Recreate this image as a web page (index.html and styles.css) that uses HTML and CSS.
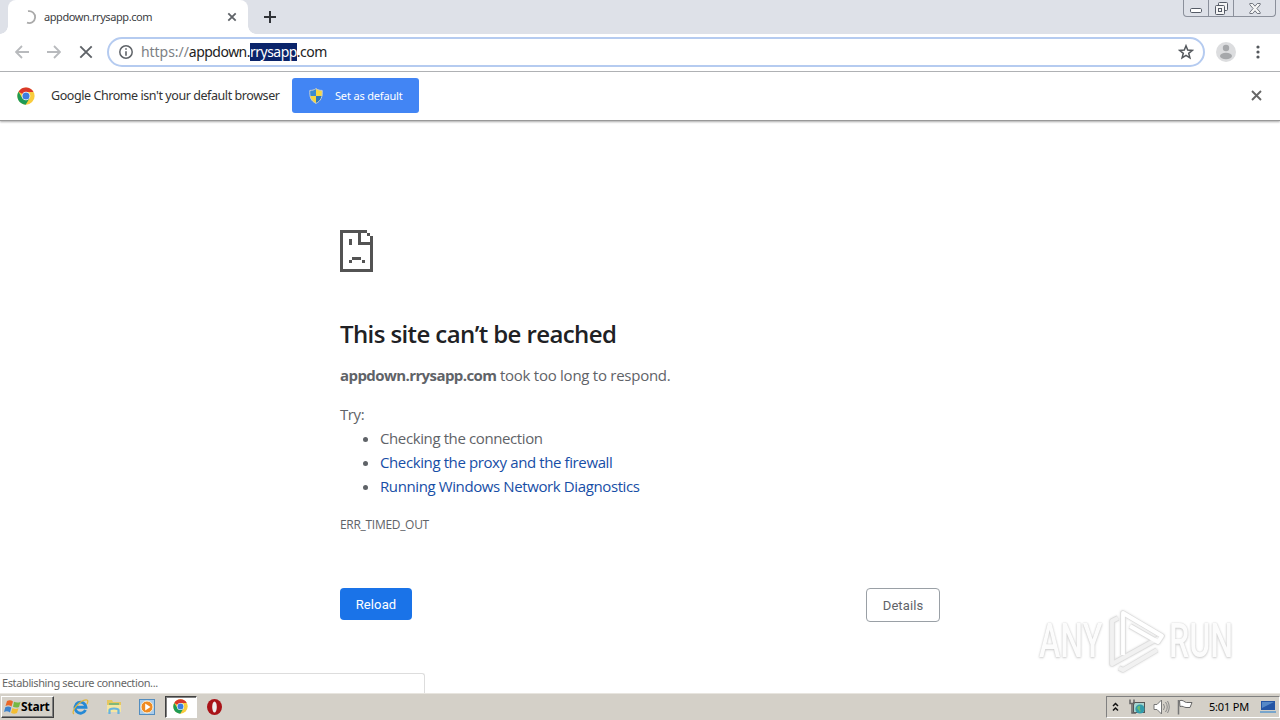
FILE: index.html
```html
<!DOCTYPE html>
<html lang="en">
<head>
  <meta charset="UTF-8">
  <title>appdown.rrysapp.com</title>
  <link rel="stylesheet" href="styles.css">
</head>
<body>

<svg width="0" height="0" class="defs">
  <symbol id="chrome" viewBox="0 0 48 48">
    <circle cx="24" cy="24" r="23" fill="#f9cc3d"/>
    <path d="M24 24L4 12.5A23 23 0 0 1 44 13H24z" fill="#d9382b"/>
    <path d="M4 12.5A23 23 0 0 0 23 47L34 29.5 24 34 14 29z" fill="#1e9b55"/>
    <circle cx="24" cy="24" r="11.5" fill="#fff"/>
    <circle cx="24" cy="24" r="9.5" fill="#3c7ee0"/>
  </symbol>
</svg>

<div class="tabstrip">
  <div class="tab">
    <svg class="spinner" width="16" height="16" viewBox="0 0 16 16"><path d="M7 2.2a6 6 0 1 1-1 11.5" fill="none" stroke="#aaa" stroke-width="1.8"/></svg>
    <span class="tab-title">appdown.rrysapp.com</span>
    <svg width="10" height="10" viewBox="0 0 10 10"><path d="M1.3 1.3l7.4 7.4M8.7 1.3L1.3 8.7" stroke="#5f6368" stroke-width="1.8"/></svg>
  </div>
  <svg class="new-tab" width="12" height="12" viewBox="0 0 12 12"><path d="M6 0v12M0 6h12" stroke="#303338" stroke-width="2"/></svg>
  <div class="window-controls">
    <span class="control min"><svg width="12" height="5" viewBox="0 0 12 5"><rect x=".5" y=".5" width="11" height="4" rx="1.2" fill="#fff" stroke="#555b66"/></svg></span>
    <span class="control max"><svg width="13" height="13" viewBox="0 0 13 13" fill="#f5f5f5" stroke="#555b66"><rect x="3.5" y=".5" width="9" height="8" rx="1"/><rect x=".5" y="3.5" width="9" height="9" rx="1"/><rect x="3.5" y="6.5" width="3" height="3"/></svg></span>
    <span class="control close"><svg width="12" height="11" viewBox="0 0 12 11"><path d="M.8.5h2.9L6 3.2 8.3.5h2.9v1.2L7.9 5.500l3.300 3.800v1.200H8.300L6 7.800l-2.300 2.700H.8V9.300l3.300-3.800L.8 1.700z" fill="#f5f5f5" stroke="#666b75" stroke-width=".9"/></svg></span>
  </div>
</div>

<div class="toolbar">
  <svg class="nav" width="14" height="14" viewBox="0 0 14 14"><path d="M14 7H1.5M7 1L1 7l6 6" fill="none" stroke="#b8babd" stroke-width="1.8"/></svg>
  <svg class="nav" width="14" height="14" viewBox="0 0 14 14"><path d="M0 7h12.5M7 1l6 6-6 6" fill="none" stroke="#b8babd" stroke-width="1.8"/></svg>
  <svg class="nav" width="14" height="14" viewBox="0 0 14 14"><path d="M1.3 1.3l11.4 11.4M12.7 1.3L1.3 12.7" stroke="#5f6368" stroke-width="1.9"/></svg>
  <div class="omnibox">
    <svg width="14" height="14" viewBox="0 0 14 14"><circle cx="7" cy="7" r="6.2" fill="none" stroke="#5f6368" stroke-width="1.5"/><path d="M7 3.3v1.5M7 6.2v4.6" stroke="#5f6368" stroke-width="1.6"/></svg>
    <span class="url"><span class="scheme">https://</span>appdown.<span class="selected">rrysapp</span>.com</span>
    <svg width="16" height="16" viewBox="0 0 16 16"><path d="M8 1.8l1.7 4.3 4.600.3-3.600 2.900 1.200 4.500L8 11.300l-3.900 2.500 1.200-4.500L1.700 6.400l4.600-.3z" fill="none" stroke="#54585d" stroke-width="1.5"/></svg>
  </div>
  <svg class="avatar" width="20" height="20" viewBox="0 0 20 20"><circle cx="10" cy="10" r="10" fill="#dcdddf"/><circle cx="10" cy="6" r="3.2" fill="#a6a8ab"/><ellipse cx="10" cy="14" rx="6" ry="3.2" fill="#a6a8ab"/></svg>
  <svg class="menu" width="4" height="14" viewBox="0 0 4 14" fill="#54585d"><circle cx="2" cy="2" r="1.6"/><circle cx="2" cy="7" r="1.6"/><circle cx="2" cy="12" r="1.6"/></svg>
</div>

<div class="infobar">
  <svg width="18" height="18"><use href="#chrome"/></svg>
  <span class="infobar-text">Google Chrome isn't your default browser</span>
  <button class="default-btn">
    <svg width="14" height="16" viewBox="0 0 14 16">
      <path d="M7 .6C5 2 3 2.400.8 2.400V8H7z" fill="#3b8bd0"/>
      <path d="M7 .6c2 1.400 4 1.800 6.200 1.800V8H7z" fill="#f5d742"/>
      <path d="M.8 8C1.500 12 4 14 7 15.400V8z" fill="#f5d742"/>
      <path d="M13.200 8c-.7 4-3.200 6-6.200 7.400V8z" fill="#2e78bb"/>
      <path d="M7 .6c2 1.500 4 1.800 6.200 1.800C13.600 9 12 13 7 15.400 2 13 .4 9 .8 2.400 3 2.400 5 2.100 7 .6z" fill="none" stroke="#c5ccd2"/>
    </svg>
    <span>Set as default</span>
  </button>
  <svg class="infobar-close" width="11" height="11" viewBox="0 0 11 11"><path d="M1 1l9 9M10 1l-9 9" stroke="#666" stroke-width="1.9"/></svg>
</div>

<main class="page">
  <div class="error">
    <svg class="sad-page" width="33" height="42" viewBox="0 0 33 42" fill="#535353" shape-rendering="crispEdges">
      <path d="M0 0h27v3h-6v9h9V9h3v33H0zM3 3v36h27V15H18V3z" fill-rule="evenodd"/>
      <path d="M27 3h3v3h-3zM30 6h3v3h-3zM9 9h3v6H9zM12 27h9v3h-9zM9 30h3v3H9zM22 30h3v3h-3z"/>
    </svg>
    <h1>This site can’t be reached</h1>
    <p class="summary"><b>appdown.rrysapp.com</b> <span>took too long to respond.</span></p>
    <p class="try">Try:</p>
    <ul>
      <li>Checking the connection</li>
      <li><a>Checking the proxy and the firewall</a></li>
      <li><a>Running Windows Network Diagnostics</a></li>
    </ul>
    <div class="error-code">ERR_TIMED_OUT</div>
    <div class="buttons">
      <button class="reload">Reload</button>
      <button class="details">Details</button>
    </div>
  </div>
  <div class="status">Establishing secure connection...</div>
  <div class="watermark">
    <span class="any">ANY</span>
    <svg width="60" height="64" viewBox="0 0 60 64" fill="none" stroke-linejoin="round">
      <g stroke="#dedede" stroke-width="5.500">
        <path d="M12 9L6 12v43l47-26"/>
        <path d="M13 59l4 2 34-20"/>
        <path d="M17 46V4l39 23-4 6-28-16"/>
      </g>
      <g stroke-width="3.800">
        <path d="M12 9L6 12v43l47-26" stroke="#f1f1f1"/>
        <path d="M13 59l4 2 34-20" stroke="#f1f1f1"/>
        <path d="M17 46V4l39 23-4 6-28-16" stroke="#fff"/>
      </g>
    </svg>
    <span class="run">RUN</span>
  </div>
</main>

<div class="taskbar">
  <button class="start">
    <svg width="17" height="16" viewBox="0 0 17 16"><path d="M3 2c2-1 4-1 6 .4L7.500 7.500C5.500 6 3.500 6 1.500 7z" fill="#ea6728"/><path d="M10 2.800c2 1 4 1 6.500.2L15 8c-2 .9-4 .8-6-.2z" fill="#75b843"/><path d="M1.300 8.200c2-1 4-1 6 .3L6 13.500c-2-1.500-4-1.500-6-.5z" fill="#3d83cd"/><path d="M8.500 9c2 1.300 4 1.200 6 .3L13 14c-2 1-4 1-6-.3z" fill="#f3bd32"/></svg>
    <span>Start</span>
  </button>
  <div class="quick">
    <span class="task"><svg width="17" height="16" viewBox="0 0 17 16"><path d="M13.500 11A5.500 5.500 0 1 1 14 8.300H4.500" fill="none" stroke="#2589d5" stroke-width="2.900"/><path d="M2 15C-2 13 8 1 14 .8c3-.1 1.500 3.500.8 4.200" fill="none" stroke="#e1b63a" stroke-width="1.200"/></svg></span>
    <span class="task"><svg width="16" height="16" viewBox="0 0 16 16"><path d="M1 1h5l1 2h8v9H1z" fill="#e6c75f"/><path d="M3 4h10v3H3z" fill="#82b878"/><path d="M1 6h14v7H1z" fill="#f6e6a1"/><path d="M3.500 15v-4c0-2 9-2 9 0v4" fill="none" stroke="#64b4df" stroke-width="2.200"/></svg></span>
    <span class="task"><svg width="16" height="16" viewBox="0 0 16 16"><rect x=".5" y=".5" width="15" height="15" fill="#a9cceb" stroke="#538dbf"/><circle cx="8" cy="8" r="6" fill="#ef8b22" stroke="#fff1d5"/><path d="M6.200 4.500v7L11.500 8z" fill="#fff"/></svg></span>
    <span class="task active"><svg width="15" height="15"><use href="#chrome"/></svg></span>
    <span class="task"><svg width="15" height="16" viewBox="0 0 15 16"><ellipse cx="7.500" cy="8" rx="7.500" ry="8" fill="#a91318"/><ellipse cx="7.500" cy="8" rx="2.300" ry="5.500" fill="#eee"/></svg></span>
  </div>
  <div class="tray">
    <svg width="7" height="10" viewBox="0 0 7 10"><path d="M1 4l2.500-2.500L6 4M1 8.500L3.500 6 6 8.500" fill="none" stroke="#111" stroke-width="1.500"/></svg>
    <svg class="network" width="17" height="16" viewBox="0 0 17 16"><rect x="4.500" y="3.500" width="11" height="10" fill="#a5d4d0" stroke="#555"/><path d="M1 .5v4h4v-4M3 4v10h4" fill="none" stroke="#666" stroke-width="1.500"/><circle cx="11" cy="10" r="4.600" fill="#329bab"/><path d="M8 9c2-4 4-2 3 0s2 2 0 4" fill="#6bbd70"/></svg>
    <svg class="volume" width="17" height="16" viewBox="0 0 17 16"><path d="M1 5.500h3L8.500 1v14L4 10.500H1z" fill="#fff" stroke="#777"/><path d="M10.500 5q2 3 0 6M12.500 3q3.500 5 0 10M14.500 2q3.500 6 0 12" fill="none" stroke="#888"/></svg>
    <svg class="flag" width="17" height="16" viewBox="0 0 17 16"><path d="M2.500 1.500c4-1 5 2 7 2h5.500l-2 5H9c-2 0-3-2-6-1z" fill="#fff" stroke="#666"/><path d="M1.500 1v14.500" stroke="#777" stroke-width="1.500"/></svg>
    <span class="clock">5:01 PM</span>
    <svg class="desktop" width="16" height="14" viewBox="0 0 16 14"><path d="M1 1h14v9H1z" fill="#2455a5"/><path d="M2 2h12L2 8z" fill="#5588c7"/><path d="M0 11h16v2H0z" fill="#79a6cc"/></svg>
  </div>
</div>

</body>
</html>
```
FILE: styles.css
```css
* {
  box-sizing: border-box;
}

body {
  margin: 0;
  width: 1280px;
  height: 720px;
  overflow: hidden;
  display: flex;
  flex-direction: column;
  background: #fff;
  font-family: "Noto Sans", sans-serif;
  white-space: nowrap;
}

svg {
  display: block;
  flex: none;
}

button {
  font-family: inherit;
  border: none;
  padding: 0;
}

.defs {
  position: absolute;
}

/* tabs */
.tabstrip {
  height: 34px;
  flex: none;
  display: flex;
  align-items: flex-start;
  padding-left: 8px;
  background: #dee1e8;
}

.tab {
  position: relative;
  width: 240px;
  height: 34px;
  padding: 0 11px 0 13px;
  display: flex;
  align-items: center;
  background: #fff;
  border-radius: 8px 8px 0 0;
}

.tab::before,
.tab::after {
  content: "";
  position: absolute;
  bottom: 0;
  width: 8px;
  height: 8px;
}

.tab::before {
  left: -8px;
  background: radial-gradient(circle at 0 0, transparent 7.5px, #fff 8px);
}

.tab::after {
  right: -8px;
  background: radial-gradient(circle at 100% 0, transparent 7.5px, #fff 8px);
}

.tab-title {
  flex: 1;
  margin-left: 7px;
  padding-bottom: 2px;
  font-size: 11px;
  letter-spacing: -0.42px;
  color: #3c4043;
}

.new-tab {
  margin: 11px 0 0 16px;
}

.window-controls {
  height: 17px;
  margin: 0 4px 0 auto;
  display: flex;
  border: 1px solid #8b909b;
  border-top: none;
  border-radius: 0 0 4px 4px;
}

.control {
  display: flex;
  justify-content: center;
  width: 25px;
  border-right: 1px solid #8b909b;
}

.control.min {
  padding-top: 8px;
}

.control.max {
  padding-top: 2px;
}

.control.close {
  width: 41px;
  padding-top: 3px;
  border: none;
}

/* toolbar */
.toolbar {
  height: 38px;
  flex: none;
  display: flex;
  align-items: center;
  padding: 0 20px 2px 15px;
  border-bottom: 1px solid #b0b2b5;
}

.nav {
  margin-right: 18px;
}

.omnibox {
  width: 1098px;
  height: 30px;
  margin-left: -4px;
  padding: 0 9px 0 10px;
  display: flex;
  align-items: center;
  border: 2px solid #b5cbf0;
  border-radius: 15px;
}

.url {
  flex: 1;
  margin-left: 8px;
  font-size: 14px;
  line-height: 18px;
  letter-spacing: -0.52px;
  color: #222;
}

.scheme {
  letter-spacing: -0.05px;
  color: #7d8185;
}

.selected {
  display: inline-block;
  height: 18px;
  background: #0a246a;
  color: #fff;
}

.avatar {
  margin-left: 11px;
}

.menu {
  margin-left: 20px;
}

/* infobar */
.infobar {
  position: relative;
  height: 49px;
  flex: none;
  display: flex;
  align-items: center;
  padding: 0 18px 1px 17px;
  border-bottom: 1px solid #999;
  box-shadow: 0 1px 2px #aaa;
}

.infobar-text {
  width: 241px;
  margin-left: 16px;
  padding-bottom: 1px;
  font-size: 12.5px;
  letter-spacing: -0.43px;
  color: #333;
}

.default-btn {
  width: 127px;
  height: 35px;
  padding-left: 17px;
  display: flex;
  align-items: center;
  gap: 12px;
  border-radius: 3px;
  background: #4285f4;
  color: #fff;
  font-size: 11px;
  letter-spacing: -0.17px;
}

.infobar-close {
  margin-left: auto;
}

/* error page */
.page {
  position: relative;
  flex: 1;
}

.error {
  width: 600px;
  margin: 0 auto;
  padding-top: 109px;
  color: #5f6368;
  font-family: "Open Sans", sans-serif;
  font-size: 15px;
  line-height: 24px;
  letter-spacing: -0.39px;
}

h1 {
  margin: 45px 0 0;
  font-size: 24px;
  font-weight: 600;
  line-height: 34px;
  letter-spacing: -0.6px;
  color: #202124;
}

p {
  margin: 0;
}

.summary {
  margin-top: 12px;
}

.summary b {
  letter-spacing: -0.58px;
}

.summary span {
  letter-spacing: -0.26px;
}

.try {
  margin-top: 15px;
}

ul {
  margin: 0;
  padding-left: 40px;
}

a {
  color: #174ea6;
}

.error-code {
  margin-top: 15px;
  font-size: 12px;
  letter-spacing: -0.3px;
}

.buttons {
  display: flex;
  justify-content: space-between;
  align-items: flex-start;
  margin-top: 51px;
}

.reload,
.details {
  height: 32px;
  width: 72px;
  border-radius: 4px;
  background: #1a73e8;
  color: #fff;
  font-family: Roboto, sans-serif;
  font-size: 13px;
  letter-spacing: 0.1px;
}

.details {
  width: 74px;
  height: 34px;
  border: 1px solid #9aa0a6;
  background: #fff;
  color: #5f6368;
}

.status {
  position: absolute;
  left: 0;
  bottom: 0;
  width: 425px;
  height: 20px;
  padding-left: 2px;
  border: solid #ddd;
  border-width: 1px 1px 0 0;
  border-radius: 0 3px 0 0;
  background: #fff;
  font-size: 11px;
  line-height: 18px;
  letter-spacing: -0.38px;
  color: #666;
}

.watermark {
  position: absolute;
  left: 1039px;
  top: 488px;
  display: flex;
  align-items: center;
  font-family: Roboto, sans-serif;
  font-size: 48px;
  font-weight: 500;
  line-height: 64px;
  color: #fcfcfc;
  text-shadow: 0 0 2px #ccc, 0 1px 3px #ccc;
}

.watermark svg {
  margin: 0 3px 0 4px;
  filter: drop-shadow(0 0 1px #ddd);
}

.any,
.run {
  width: 63px;
  transform: scaleX(0.67);
  transform-origin: left;
}

/* taskbar */
.taskbar {
  height: 27px;
  flex: none;
  display: flex;
  align-items: center;
  padding: 0 0 1px 1px;
  border-top: 1px solid #e8e5df;
  background: #d4d0c8;
}

.start {
  width: 53px;
  height: 22px;
  padding-left: 2px;
  display: flex;
  align-items: center;
  border: 1px solid;
  border-color: #fff #404040 #404040 #fff;
  box-shadow: inset -1px -1px #808080;
  background: #d4d0c8;
  font-size: 12px;
  font-weight: bold;
  letter-spacing: -0.2px;
  color: #000;
}

.quick {
  display: flex;
  gap: 1.600px;
  margin-left: 10px;
}

.task {
  width: 32px;
  height: 22px;
  display: flex;
  align-items: center;
  justify-content: center;
}

.task.active {
  border: 1px solid;
  border-color: #404040 #fff #fff #404040;
  box-shadow: inset 1px 1px #808080;
  background: #fff;
}

.tray {
  width: 174px;
  height: 22px;
  margin-left: auto;
  padding: 0 3px 0 5px;
  display: flex;
  align-items: center;
  border: 1px solid;
  border-color: #808080 #fff #fff #808080;
}

.network {
  margin-left: 10px;
}

.volume {
  margin-left: 7px;
}

.flag {
  margin-left: 7px;
}

.clock {
  flex: 1;
  margin-left: 15px;
  font-size: 11px;
  letter-spacing: -0.2px;
  color: #000;
}
```
